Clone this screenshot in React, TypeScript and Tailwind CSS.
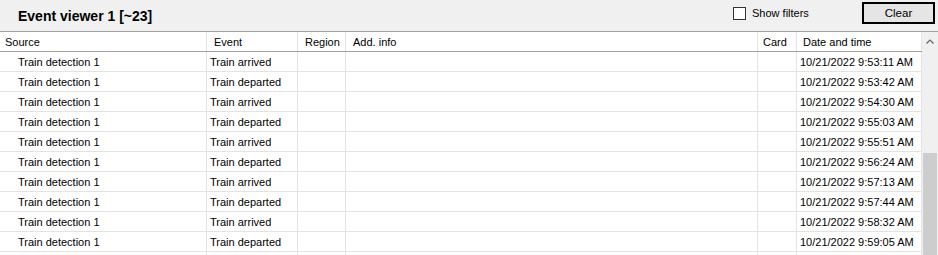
// App.tsx - Event viewer panel
const rows = [
  ["Train arrived", "10/21/2022 9:53:11 AM"],
  ["Train departed", "10/21/2022 9:53:42 AM"],
  ["Train arrived", "10/21/2022 9:54:30 AM"],
  ["Train departed", "10/21/2022 9:55:03 AM"],
  ["Train arrived", "10/21/2022 9:55:51 AM"],
  ["Train departed", "10/21/2022 9:56:24 AM"],
  ["Train arrived", "10/21/2022 9:57:13 AM"],
  ["Train departed", "10/21/2022 9:57:44 AM"],
  ["Train arrived", "10/21/2022 9:58:32 AM"],
  ["Train departed", "10/21/2022 9:59:05 AM"],
];

export default function App() {
  return (
    <div
      className="w-[938px] h-[255px] overflow-hidden bg-[#f0f0f0] text-black text-[11px] leading-none"
      style={{ fontFamily: '"Liberation Sans", Arial, sans-serif' }}
    >
      {/* top bar */}
      <div className="flex items-center h-[32px] border-b border-[#a0a0a0]">
        <div className="pl-[18px] font-bold text-[14px] pt-[1px]">Event viewer 1 [~23]</div>
        <div className="ml-auto flex items-center w-[129px] -mt-[5px]">
          <div className="w-[13px] h-[13px] border border-[#333] bg-white" />
          <span className="ml-[6px]">Show filters</span>
        </div>
        <button className="w-[73px] h-[22px] mr-[3px] -mt-[5px] border-2 border-black bg-[#e5e5e5] flex items-center justify-center text-[11.5px] pt-[1px]">
          Clear
        </button>
      </div>

      <div className="flex">
        <div className="w-[922px] bg-white">
          {/* header */}
          <div className="flex h-[20px] border-b border-[#a0a0a0]">
            <div className="w-[207px] pl-[5px] pt-[1px] flex items-center border-r border-[#e5e5e5]">Source</div>
            <div className="w-[91px] pl-[7px] pt-[1px] flex items-center border-r border-[#e5e5e5]">Event</div>
            <div className="w-[48px] pl-[7px] pt-[1px] flex items-center border-r border-[#e5e5e5]">Region</div>
            <div className="w-[412px] pl-[7px] pt-[1px] flex items-center border-r border-[#e5e5e5]">Add. info</div>
            <div className="w-[39px] pl-[5px] pt-[1px] flex items-center border-r border-[#e5e5e5]">Card</div>
            <div className="w-[125px] pl-[6px] pt-[1px] flex items-center border-r border-[#e5e5e5]">Date and time</div>
          </div>
          {rows.map(([ev, dt], i) => (
            <div key={i} className="flex h-[20px] border-b border-[#e3e3e3]">
              <div className="w-[207px] pl-[18px] pt-[1px] flex items-center border-r border-[#e3e3e3]">Train detection 1</div>
              <div className="w-[91px] pl-[3px] pt-[1px] flex items-center border-r border-[#e3e3e3]">{ev}</div>
              <div className="w-[48px] border-r border-[#e3e3e3]" />
              <div className="w-[412px] border-r border-[#e3e3e3]" />
              <div className="w-[39px] border-r border-[#e3e3e3]" />
              <div className="w-[125px] pl-[3px] pt-[1px] flex items-center border-r border-[#e3e3e3]">{dt}</div>
            </div>
          ))}
          {/* next row, scrolled out of view */}
          <div className="flex h-[20px]">
            <div className="w-[207px] border-r border-[#e3e3e3]" />
            <div className="w-[91px] border-r border-[#e3e3e3]" />
            <div className="w-[48px] border-r border-[#e3e3e3]" />
            <div className="w-[412px] border-r border-[#e3e3e3]" />
            <div className="w-[39px] border-r border-[#e3e3e3]" />
            <div className="w-[125px] border-r border-[#e3e3e3]" />
          </div>
        </div>

        {/* scrollbar */}
        <div className="w-[16px] flex flex-col bg-[#f0f0f0]">
          <div className="h-[17px] flex items-center justify-center">
            <svg width="8" height="5" viewBox="0 0 8 5" className="mt-[1px]">
              <path d="M0.5 4.5 L4 1 L7.5 4.5" fill="none" stroke="#606060" strokeWidth="1.2" />
            </svg>
          </div>
          <div className="h-[104px]" />
          <div className="flex-1 mx-[1px] bg-[#cdcdcd] h-[200px]" />
        </div>
      </div>
    </div>
  );
}
